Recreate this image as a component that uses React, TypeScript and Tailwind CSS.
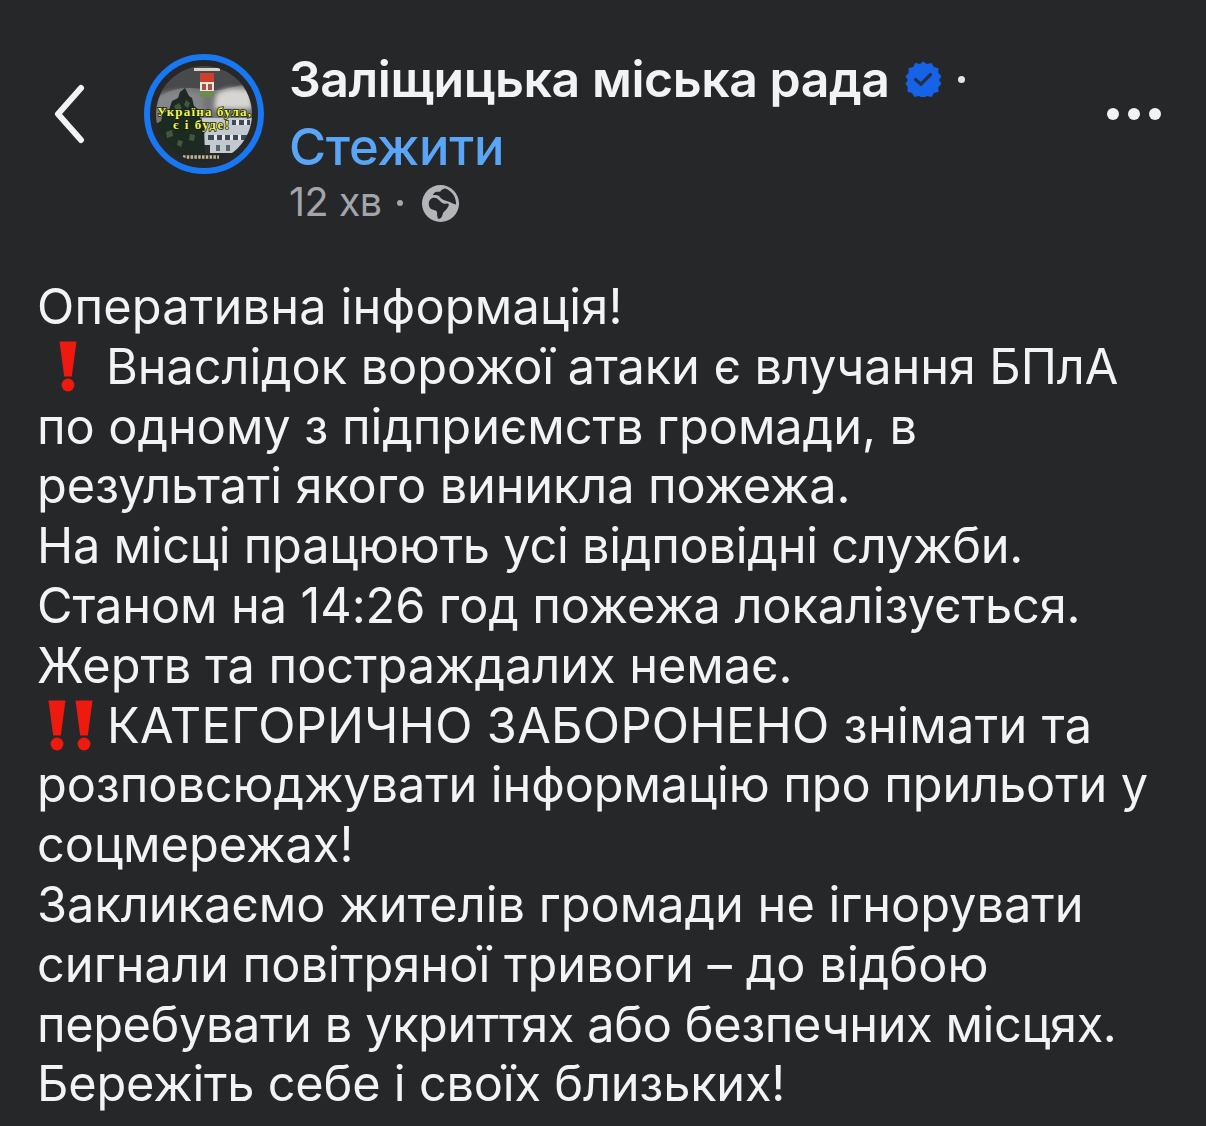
function Bang({ className }: { className?: string }) {
  return (
    <svg viewBox="0 0 18 51" className={className} aria-hidden="true">
      <path d="M0.500 0.500h17l-4.700 35H5.200z" fill="#ee1a0f" />
      <circle cx="9" cy="44" r="6.400" fill="#ee1a0f" />
    </svg>
  );
}

function Avatar() {
  return (
    <div className="w-[120px] h-[120px] rounded-full border-[6px] border-[#1877f2] p-[6px] shrink-0">
      <svg viewBox="0 0 96 96" className="w-full h-full rounded-full">
        <defs>
          <filter id="soft" x="-10%" y="-10%" width="120%" height="120%">
            <feGaussianBlur stdDeviation="0.600" />
          </filter>
          <filter id="cloud" x="-20%" y="-20%" width="140%" height="140%">
            <feGaussianBlur stdDeviation="2.500" />
          </filter>
        </defs>
        <g filter="url(#soft)">
          <rect width="96" height="96" fill="#737477" />
          <path d="M0 0h96v20C84 16 70 26 54 24S18 18 0 34z" fill="#47484c" />
          <path d="M0 30c16-8 34-6 46-2l2 20H0z" fill="#85868a" filter="url(#cloud)" />
          <path d="M60 28c8-6 22-7 36-3v18H58z" fill="#d6d5d1" filter="url(#cloud)" />
          <rect x="38" y="2" width="26" height="3" fill="#d6d4cc" />
          <rect x="44" y="7" width="14" height="9" fill="#cf412c" />
          <rect x="44" y="16" width="14" height="9" fill="#ece8df" />
          <path d="M46 18h4v6h-4zM52 18h4v6h-4z" fill="#a8504a" />
          <rect x="44" y="25" width="14" height="6" fill="#6d8a50" />
          <path d="M46 52h50v35H46z" fill="#c3c9cf" />
          <path d="M76 54h18v5H76zM52 69h40v5H52z" fill="#3d4954" />
          <path d="M80 54h3v5h-3zM88 54h3v5h-3zM58 69h3v5h-3zM66 69h3v5h-3zM74 69h3v5h-3zM82 69h3v5h-3z" fill="#e6eaee" />
          <path d="M47 79h7v8h-7z" fill="#2b2e32" />
          <path d="M60 79h4v6h-4zM70 79h4v6h-4z" fill="#5a656e" />
          <path d="M29 22l4 8 3 2 2 8 5 4 1 8 4 6 1 33H0V58l5-3 2-8 6-3 3-9 6-3 2-6z" fill="#1b2a24" />
          <path d="M18 40l5-3 3 5-5 4zM30 34l4 3-2 5-4-3zM10 66l6-2 1 6-6 2zM34 68l5 1-1 6-5-1zM22 74l5 1-2 6-4-2z" fill="#41593f" />
          <path d="M0 87h96v9H0z" fill="#24272b" />
          <path d="M27 91h36" stroke="#c4b98c" strokeWidth="3.500" strokeDasharray="2.500 1.300" />
        </g>
        <g
          fontFamily="'Liberation Serif', serif"
          fontWeight="700"
          fontSize="13"
          fill="#eef74a"
          stroke="#1c2110"
          strokeWidth="1.600"
          paintOrder="stroke"
        >
          <text x="1" y="50" textLength="94" lengthAdjust="spacing">Україна була,</text>
          <text x="17" y="63" textLength="56" lengthAdjust="spacing">є і буде!</text>
        </g>
      </svg>
    </div>
  );
}

function VerifiedBadge() {
  return (
    <svg viewBox="0 0 36 36" className="w-[36px] h-[36px] shrink-0" aria-hidden="true">
      <path
        d="M18 0.500l4 2.600 4.600-1.100 2.300 4.100 4.600 1.100-.2 4.700 3.300 3.300-2.500 3.800 2.500 3.800-3.300 3.300.2 4.700-4.600 1.100-2.300 4.100-4.600-1.100-4 2.600-4-2.600-4.600 1.100-2.300-4.100-4.600-1.100.2-4.700L.4 22.800l2.500-3.800L.4 15.200l3.300-3.300-.2-4.700 4.600-1.100L10.400 2l4.600 1.100z"
        fill="#1763e8"
      />
      <path d="M10.500 18.500l5.300 4.800 9.700-9.800" fill="none" stroke="#22304f" strokeWidth="3.300" strokeLinecap="round" strokeLinejoin="round" />
    </svg>
  );
}

function Globe() {
  return (
    <svg viewBox="0 0 40 40" className="w-[39px] h-[39px]" aria-hidden="true">
      <circle cx="20" cy="20" r="19" fill="#b4b5b9" />
      <path
        d="M8 20c0-4 3-6 6-6 2 0 3 1 5 3 2 2 4 4 7 3 3 0 3 1 2 3-1 2-3 4-5 6-1 2-1 5-3 6-1 1-3 1-3-1-1-2 0-4-1-6-1-1-3-1-5-2-2-1-3-3-3-6z"
        fill="#26272a"
      />
      <path
        d="M12 11c3 1 6 0 7 2 2 3 6 4 9 5 3 1 5 3 8 3 0-5-2-11-7-14-2-2-4-3-6-2-3 1-2 3-5 3-2 0-4 0-6 3z"
        fill="#26272a"
      />
    </svg>
  );
}

export default function App() {
  return (
    <div className="w-[1206px] h-[1126px] overflow-hidden bg-[#262729] text-[#f2f3f5] font-['Inter','Liberation_Sans',sans-serif]">
      {/* Header */}
      <div className="flex items-start h-[277px] pt-[54px]">
        <div className="w-[144px] pl-[52px] pt-[30px] shrink-0">
          <svg viewBox="0 0 36 60" className="w-[36px] h-[60px]" aria-hidden="true">
            <path d="M29 4L6 30l23 26" fill="none" stroke="#f2f3f5" strokeWidth="6" strokeLinecap="round" strokeLinejoin="round" />
          </svg>
        </div>
        <Avatar />
        <div className="ml-[25px] -mt-[1px] flex-1">
          <div className="flex items-center h-[52px]">
            <span className="text-[50px] font-semibold tracking-[-0.46px] leading-[52px] whitespace-nowrap">
              Заліщицька міська рада
            </span>
            <span className="ml-[15px]">
              <VerifiedBadge />
            </span>
            <span className="ml-[17px] w-[7px] h-[7px] rounded-full bg-[#e4e5e8]" />
          </div>
          <div className="text-[50.7px] font-medium leading-[60px] mt-[12px] text-[#5aa5f5] tracking-[-0.3px]">Стежити</div>
          <div className="flex items-center h-[48px] mt-[2px] text-[#a3a5aa] text-[39.5px]">
            <span className="tracking-[-0.5px]">12 хв</span>
            <span className="ml-[15px] mr-[18px] w-[6px] h-[6px] rounded-full bg-[#a3a5aa]" />
            <Globe />
          </div>
        </div>
        <div className="flex gap-[9px] mt-[54px] mr-[45px]">
          <span className="w-[12px] h-[12px] rounded-full bg-[#f2f3f5]" />
          <span className="w-[12px] h-[12px] rounded-full bg-[#f2f3f5]" />
          <span className="w-[12px] h-[12px] rounded-full bg-[#f2f3f5]" />
        </div>
      </div>

      {/* Post text */}
      <div className="pl-[37px] text-[48.7px] leading-[59.8px] whitespace-nowrap">
        <div className="tracking-[0.2px]">Оперативна інформація!</div>
        <div className="flex items-center">
          <Bang className="ml-[22px] w-[18px] h-[51px] mr-[29px]" />
          <span className="tracking-[-0.08px]">Внаслідок ворожої атаки є влучання БПлА</span>
        </div>
        <div className="tracking-[-0.05px]">по одному з підприємств громади, в</div>
        <div className="tracking-[-0.12px]">результаті якого виникла пожежа.</div>
        <div className="tracking-[-0.24px]">На місці працюють усі відповідні служби.</div>
        <div className="tracking-[-0.1px]">Станом на 14:26 год пожежа локалізується.</div>
        <div className="tracking-[-0.04px]">Жертв та постраждалих немає.</div>
        <div className="flex items-center">
          <Bang className="ml-[11px] w-[18px] h-[51px]" />
          <Bang className="ml-[9px] w-[18px] h-[51px] mr-[14px]" />
          <span className="tracking-[0.33px]">КАТЕГОРИЧНО ЗАБОРОНЕНО знімати та</span>
        </div>
        <div className="tracking-[-0.1px]">розповсюджувати інформацію про прильоти у</div>
        <div>соцмережах!</div>
        <div>Закликаємо жителів громади не ігнорувати</div>
        <div className="tracking-[0.05px]">сигнали повітряної тривоги – до відбою</div>
        <div className="tracking-[-0.4px]">перебувати в укриттях або безпечних місцях.</div>
        <div className="tracking-[-0.2px]">Бережіть себе і своїх близьких!</div>
      </div>
    </div>
  );
}
